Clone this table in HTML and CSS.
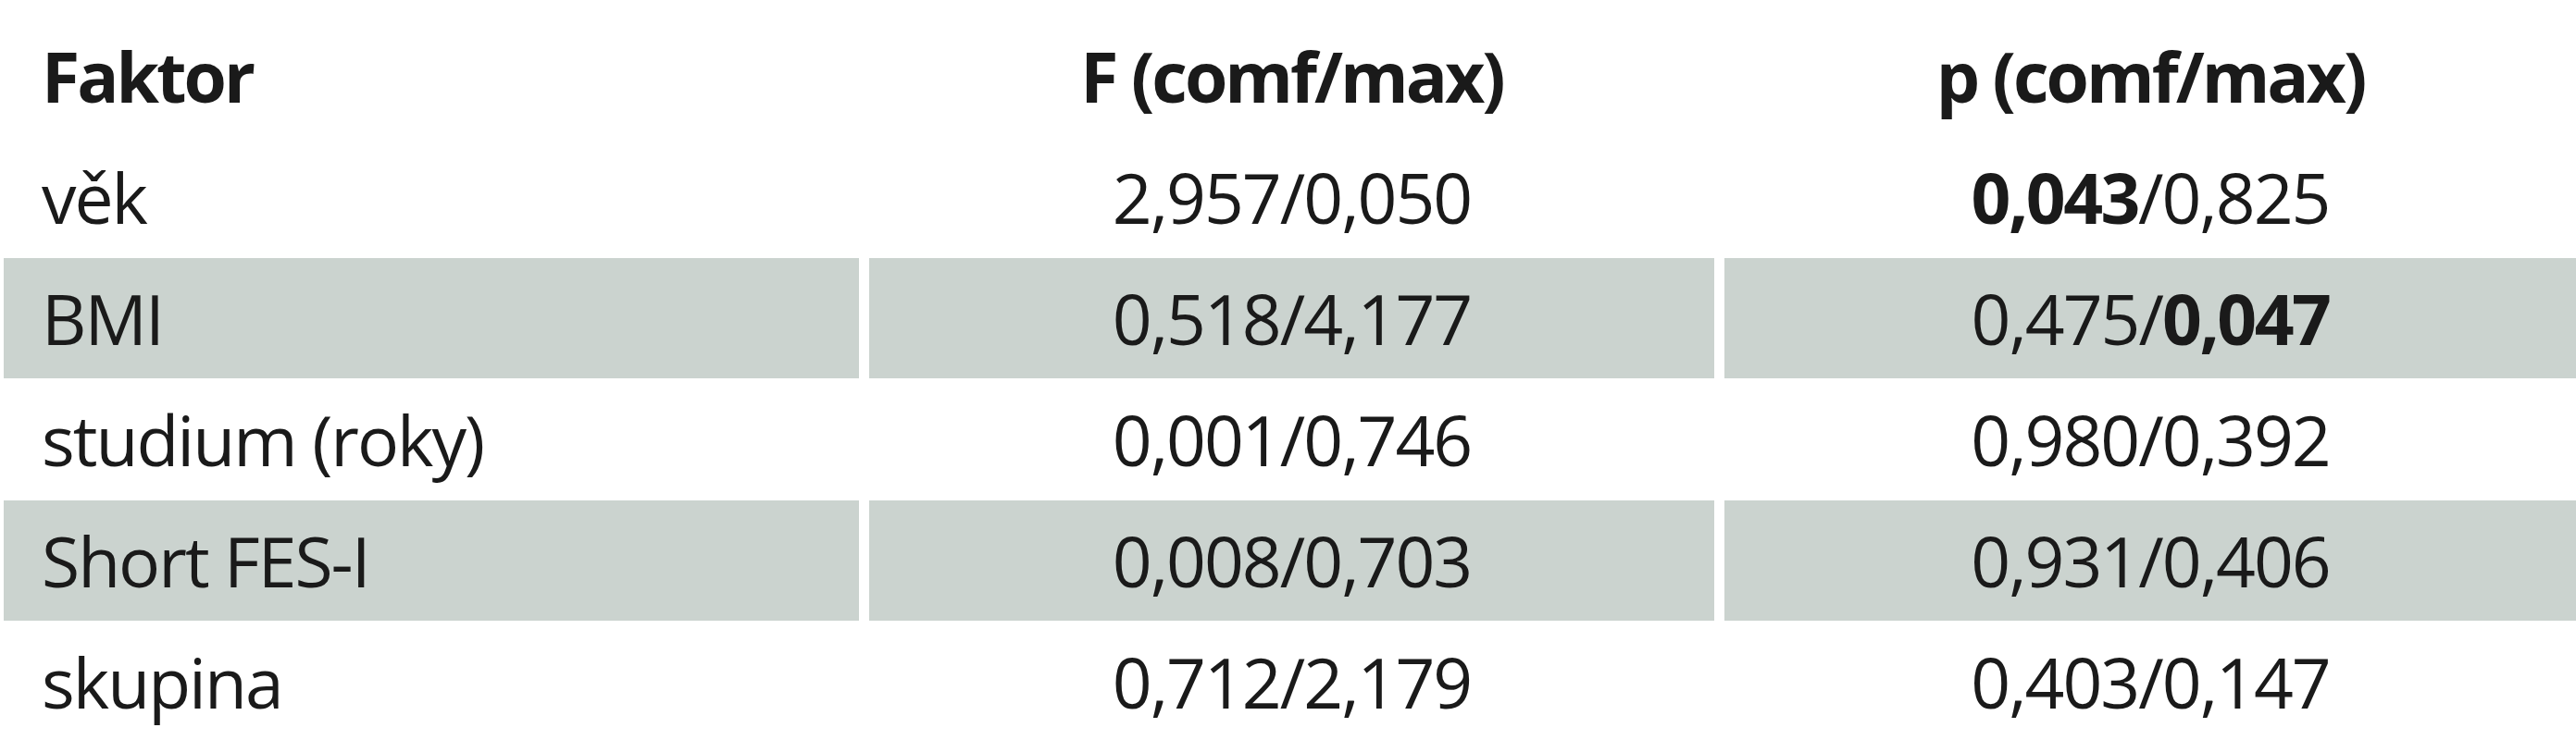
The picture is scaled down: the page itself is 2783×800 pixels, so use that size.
FILE: index.html
```html
<!DOCTYPE html>
<html lang="cs">
<head>
<meta charset="utf-8">
<title>Faktor</title>
<link rel="stylesheet" href="styles.css">
</head>
<body>
<div class="table">
  <div class="row head">
    <div class="cell first">Faktor</div>
    <div class="cell">F (comf/max)</div>
    <div class="cell">p (comf/max)</div>
  </div>
  <div class="row">
    <div class="cell first">věk</div>
    <div class="cell">2,957/0,050</div>
    <div class="cell"><b>0,043</b>/0,825</div>
  </div>
  <div class="row shaded">
    <div class="cell first">BMI</div>
    <div class="cell">0,518/4,177</div>
    <div class="cell">0,475/<b>0,047</b></div>
  </div>
  <div class="row">
    <div class="cell first">studium (roky)</div>
    <div class="cell">0,001/0,746</div>
    <div class="cell">0,980/0,392</div>
  </div>
  <div class="row shaded">
    <div class="cell first">Short FES-I</div>
    <div class="cell">0,008/0,703</div>
    <div class="cell">0,931/0,406</div>
  </div>
  <div class="row">
    <div class="cell first">skupina</div>
    <div class="cell">0,712/2,179</div>
    <div class="cell">0,403/0,147</div>
  </div>
</div>
</body>
</html>
```
FILE: styles.css
```css
html, body {
  margin: 0;
  padding: 0;
  background: #ffffff;
}

body {
  font-family: "Open Sans", "Noto Sans", "Liberation Sans", sans-serif;
  color: #1a1a1a;
}

.table {
  display: flex;
  flex-direction: column;
  gap: 1px;
  padding: 17px 0 0 4px;
}

.row {
  display: grid;
  grid-template-columns: 924px 913px 1fr;
  column-gap: 11px;
  height: 130px;
}

.cell {
  display: flex;
  align-items: center;
  justify-content: center;
  font-size: 75px;
  letter-spacing: -2px;
  white-space: nowrap;
}

.cell.first {
  justify-content: flex-start;
  padding-left: 41px;
}

.head .cell {
  font-weight: 700;
  letter-spacing: -3px;
}

.shaded .cell {
  background: #cbd3cf;
}

b {
  font-weight: 700;
  letter-spacing: -2.5px;
}
```
